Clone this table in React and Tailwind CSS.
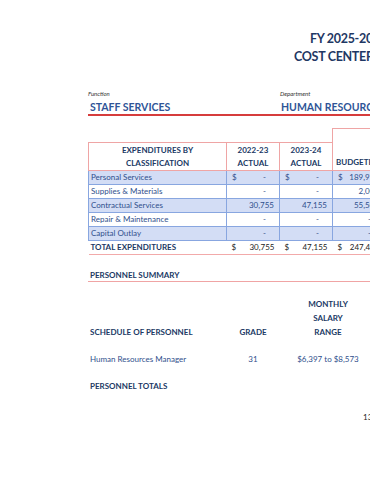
import React from 'react';

const rows = [
  { name: 'Personal Services', a: null, b: null, c: '189,978', dollar: true, shade: true },
  { name: 'Supplies & Materials', a: null, b: null, c: '2,000', shade: false },
  { name: 'Contractual Services', a: '30,755', b: '47,155', c: '55,500', shade: true },
  { name: 'Repair & Maintenance', a: null, b: null, c: null, shade: false },
  { name: 'Capital Outlay', a: null, b: null, c: null, shade: true },
];

const Amount = ({ value, dollar }) => (
  <div className="flex h-[13px] items-center justify-between pl-[5px]">
    <span>{dollar ? '$' : ''}</span>
    {value ? <span className="pr-[5px]">{value}</span> : <span className="pr-[13px]">-</span>}
  </div>
);

export default function App() {
  return (
    <div className="relative h-[480px] w-[370px] overflow-hidden bg-white" style={{ fontFamily: 'Lato, "Open Sans", sans-serif' }}>
      <div className="w-[700px] pl-[88px] pt-[30px]">
        {/* title */}
        <div className="text-[12.5px] font-bold leading-[18px] tracking-[-0.3px] text-[#1f3864]">
          <div className="pl-[222px]">FY 2025-2026</div>
          <div className="pl-[206px]">COST CENTER SUMMARY</div>
        </div>

        {/* function / department */}
        <div className="mt-[24px] flex border-b-2 border-[#d63c3c]">
          <div className="w-[192px]">
            <div className="text-[6px] italic leading-[8px] text-[#333]">Function</div>
            <div className="mt-[3px] pl-[2px] text-[10.5px] font-bold leading-[13px] text-[#2f5597]">STAFF SERVICES</div>
          </div>
          <div>
            <div className="text-[6px] italic leading-[8px] text-[#333]">Department</div>
            <div className="mt-[3px] pl-[1px] text-[10.5px] font-bold leading-[13px] text-[#2f5597]">HUMAN RESOURCES</div>
          </div>
        </div>

        {/* expenditures table */}
        <table className="mt-[12px] table-fixed border-collapse text-[8px] leading-[13px] text-[#2f4f8c]">
          <colgroup>
            <col className="w-[138px]" />
            <col className="w-[53px]" />
            <col className="w-[53px]" />
            <col className="w-[52px]" />
            <col className="w-[60px]" />
          </colgroup>
          <tbody>
            <tr className="h-[14px]">
              <td colSpan={3}></td>
              <td rowSpan={2} className="border border-[#efa5a5] align-bottom font-bold text-[#203864]">
                <div className="pb-[1px] pl-[3px]">BUDGETED</div>
              </td>
              <td rowSpan={2} className="border border-[#efa5a5] align-bottom font-bold text-[#203864]">
                <div className="pb-[1px] text-center">ESTIMATED</div>
              </td>
            </tr>
            <tr className="h-[28px] font-bold text-[#203864]">
              <td className="border border-[#efa5a5] text-center">
                <div>EXPENDITURES BY</div>
                <div>CLASSIFICATION</div>
              </td>
              <td className="border border-[#efa5a5] text-center">
                <div>2022-23</div>
                <div>ACTUAL</div>
              </td>
              <td className="border border-[#efa5a5] text-center">
                <div>2023-24</div>
                <div>ACTUAL</div>
              </td>
            </tr>
            {rows.map((r) => (
              <tr key={r.name} className={r.shade ? 'bg-[#d3ddf5]' : 'bg-white'}>
                <td className="border border-[#88a6e0] pl-[2px]">
                  <div className="h-[13px] whitespace-nowrap">{r.name}</div>
                </td>
                <td className="border border-[#88a6e0]">
                  <Amount value={r.a} dollar={r.dollar} />
                </td>
                <td className="border border-[#88a6e0]">
                  <Amount value={r.b} dollar={r.dollar} />
                </td>
                <td className="border border-[#88a6e0]">
                  <Amount value={r.c} dollar={r.dollar} />
                </td>
                <td className="border border-[#88a6e0]">
                  <Amount value={r.c} dollar={r.dollar} />
                </td>
              </tr>
            ))}
            <tr className="border-b border-[#f2aaaa] font-bold text-[#203864]">
              <td className="pl-[2px]">
                <div className="h-[13px]">TOTAL EXPENDITURES</div>
              </td>
              <td className="font-normal text-[#222]">
                <Amount value="30,755" dollar />
              </td>
              <td className="font-normal text-[#222]">
                <Amount value="47,155" dollar />
              </td>
              <td className="font-normal text-[#222]">
                <Amount value="247,478" dollar />
              </td>
              <td className="font-normal text-[#222]">
                <Amount value="247,478" dollar />
              </td>
            </tr>
          </tbody>
        </table>

        {/* personnel */}
        <div className="mt-[14px] border-b border-[#f0a4a4] pl-[2px] text-[8px] font-bold leading-[12px] text-[#203864]">
          PERSONNEL SUMMARY
        </div>

        <div className="mt-[15px] flex items-end text-[8px] font-bold leading-[14px] text-[#203864]">
          <div className="w-[138px] pl-[2px]">SCHEDULE OF PERSONNEL</div>
          <div className="w-[54px] text-center">GRADE</div>
          <div className="w-[96px] text-center">
            <div>MONTHLY</div>
            <div>SALARY</div>
            <div>RANGE</div>
          </div>
        </div>

        <div className="mt-[13px] flex text-[8px] leading-[14px] text-[#2f4f8c]">
          <div className="w-[138px] pl-[2px]">Human Resources Manager</div>
          <div className="w-[54px] text-center">31</div>
          <div className="w-[96px] text-center">$6,397 to $8,573</div>
        </div>

        <div className="mt-[13px] pl-[2px] text-[8px] font-bold leading-[14px] text-[#203864]">
          PERSONNEL TOTALS
        </div>

        <div className="mt-[18px] pl-[275px] text-[8px] leading-[12px] text-[#222]">13</div>
      </div>
    </div>
  );
}
